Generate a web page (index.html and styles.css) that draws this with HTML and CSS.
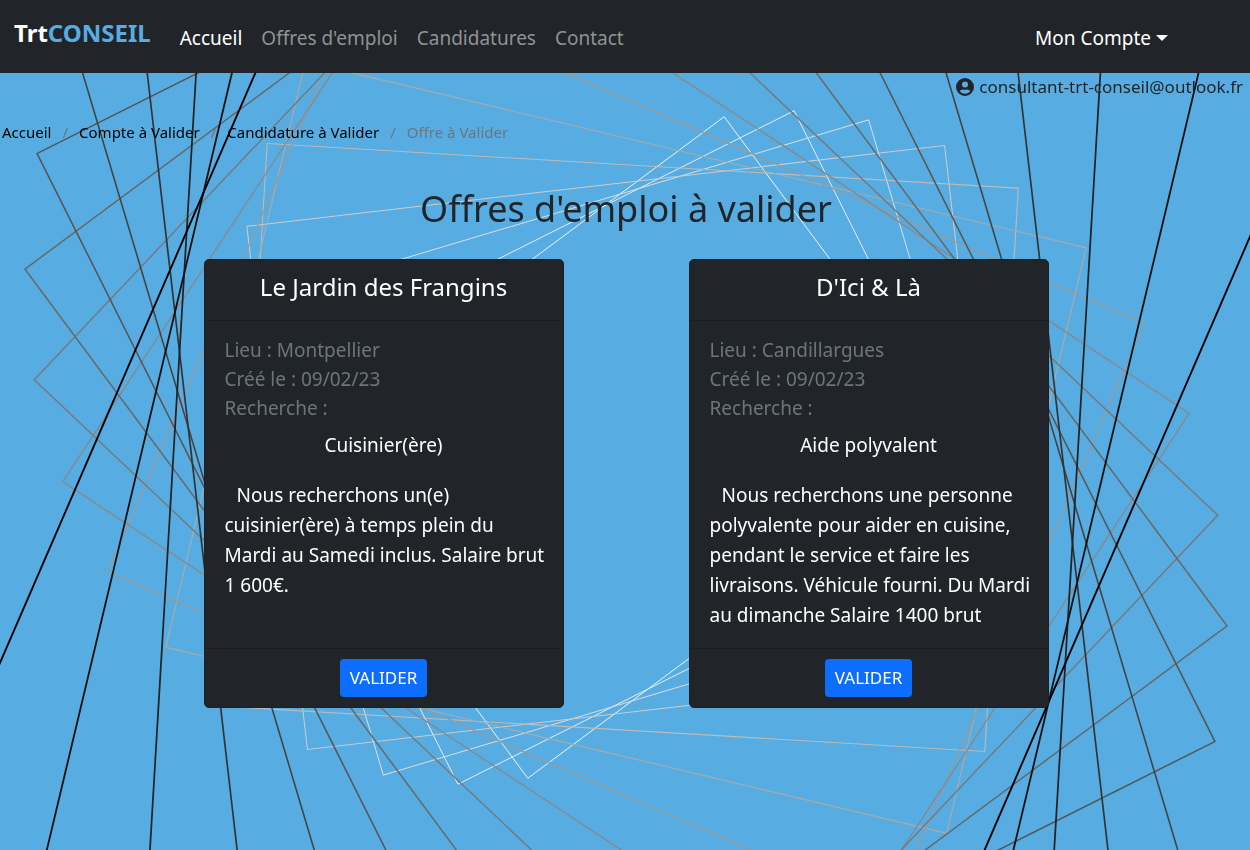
FILE: index.html
```
<!DOCTYPE html>
<html lang="fr">
<head>
<meta charset="utf-8">
<title>TrtConseil - Offres à valider</title>
<link rel="stylesheet" href="styles.css">
</head>
<body>
<svg class="backdrop" viewBox="-626 -447.5 1250 850" preserveAspectRatio="xMidYMid slice" aria-hidden="true">
  <defs><rect id="frame" x="-276" y="-207" width="552" height="414"/></defs>
  <g id="frames" fill="none" stroke-width="0.8"></g>
</svg>

<header class="navbar">
  <a class="brand" href="#">Trt<span class="brand-accent">CONSEIL</span></a>
  <nav class="nav">
    <a class="nav-link active" href="#">Accueil</a>
    <a class="nav-link" href="#">Offres d'emploi</a>
    <a class="nav-link" href="#">Candidatures</a>
    <a class="nav-link" href="#">Contact</a>
  </nav>
  <button class="account" type="button">Mon Compte<span class="caret"></span></button>
</header>

<main class="page">
  <div class="user">
    <svg class="user-icon" viewBox="0 0 512 512" aria-hidden="true"><path fill-rule="evenodd" d="M256 0a256 256 0 1 0 0 512a256 256 0 1 0 0-512zM256 96a86 86 0 1 1 0 172a86 86 0 1 1 0-172zM256 448c-62 0-115-26-149-68c18-34 52-54 91-54c4 0 20 10 58 10s54-10 58-10c39 0 73 20 91 54c-34 42-87 68-149 68z"/></svg>
    <span>consultant-trt-conseil@outlook.fr</span>
  </div>

  <nav aria-label="Fil d'Ariane">
    <ol class="breadcrumb">
      <li><a href="#">Accueil</a></li>
      <li><a href="#">Compte à Valider</a></li>
      <li><a href="#">Candidature à Valider</a></li>
      <li class="current" aria-current="page">Offre à Valider</li>
    </ol>
  </nav>

  <h1 class="title">Offres d'emploi à valider</h1>

  <div class="offers">
    <article class="card">
      <h2 class="card-header">Le Jardin des Frangins</h2>
      <div class="card-body">
        <p class="meta">Lieu : Montpellier</p>
        <p class="meta">Créé le : 09/02/23</p>
        <p class="meta">Recherche :</p>
        <h3 class="job">Cuisinier(ère)</h3>
        <p class="description">Nous recherchons un(e) cuisinier(ère) à temps plein du Mardi au Samedi inclus. Salaire brut 1&nbsp;600€.</p>
      </div>
      <div class="card-footer"><button class="btn" type="button">VALIDER</button></div>
    </article>
    <article class="card">
      <h2 class="card-header">D'Ici &amp; Là</h2>
      <div class="card-body">
        <p class="meta">Lieu : Candillargues</p>
        <p class="meta">Créé le : 09/02/23</p>
        <p class="meta">Recherche :</p>
        <h3 class="job">Aide polyvalent</h3>
        <p class="description">Nous recherchons une personne polyvalente pour aider en cuisine, pendant le service et faire les livraisons. Véhicule fourni. Du Mardi au dimanche Salaire 1400 brut</p>
      </div>
      <div class="card-footer"><button class="btn" type="button">VALIDER</button></div>
    </article>
  </div>
</main>
<script src="backdrop.js"></script>
</body>
</html>
```
FILE: backdrop.js
```
// Sixteen nested 4:3 frames, each turned 10 degrees and drawn darker than the last.
const group = document.getElementById("frames");
for (let i = 0; i < 16; i++) {
  const frame = document.createElementNS("http://www.w3.org/2000/svg", "use");
  const grey = 255 - i * 17;
  frame.setAttribute("href", "#frame");
  frame.setAttribute("stroke", `rgb(${grey},${grey},${grey})`);
  frame.setAttribute("transform", `rotate(${-36.6 + 10 * i}) scale(${1 + 0.0908 * i})`);
  group.appendChild(frame);
}
```
FILE: styles.css
```
* { box-sizing: border-box; }

body {
  margin: 0;
  min-height: 100vh;
  background: #57ade1;
  color: #212529;
  font: 19px/30px "Noto Sans", "Open Sans", sans-serif;
}

h1, h2, h3, p, ol { margin: 0; padding: 0; font-weight: 400; }
a { color: inherit; text-decoration: none; }
button { font: inherit; cursor: pointer; }

.backdrop {
  position: fixed;
  inset: 0;
  z-index: -1;
  width: 100%;
  height: 100%;
}

.navbar {
  display: flex;
  align-items: center;
  padding: 14px 82px 11px 14px;
  background: #212529;
  color: #fff;
}

.brand {
  padding-bottom: 10px;
  font-size: 24px;
  line-height: 38px;
  font-weight: 700;
}
.brand-accent { color: #57ade1; }

.nav { display: flex; flex: 1; gap: 19px; margin-left: 29px; }
.nav-link { color: #909294; }
.nav-link.active { color: #fff; }

.account {
  display: flex;
  align-items: center;
  gap: 5px;
  padding: 0;
  border: 0;
  background: none;
  color: #fff;
}
.caret {
  border: 6px solid transparent;
  border-top-color: #fff;
  border-bottom: 0;
}

.page { padding-left: 2px; }

.user {
  display: flex;
  justify-content: flex-end;
  align-items: center;
  gap: 5px;
  padding: 0 7px;
  font-size: 17px;
  line-height: 28px;
}
.user-icon { width: 18px; height: 18px; fill: #212529; }

.breadcrumb {
  display: flex;
  padding: 19px 0;
  list-style: none;
  font-size: 15px;
  line-height: 24px;
  color: #000;
}
.breadcrumb li + li::before { content: "/"; padding: 0 11px; color: #6c757d; }
.breadcrumb .current { color: #6c757d; }

.title {
  margin: 21px 0 25px;
  font-size: 36px;
  line-height: 50px;
  text-align: center;
}

.offers {
  display: grid;
  grid-template-columns: repeat(2, 360px);
  justify-content: center;
  gap: 24px 125px;
  padding-bottom: 24px;
}

.card {
  display: flex;
  flex-direction: column;
  border: 1px solid #1d2024;
  border-radius: 5px;
  background: #212529;
  color: #fff;
}
.card-header {
  padding: 9px 20px 15px;
  border-bottom: 1px solid #1b1e21;
  font-size: 24px;
  line-height: 36px;
  text-align: center;
}
.card-body { flex: 1; padding: 15px 20px 18px; }
.meta { color: #6c757d; line-height: 29px; }
.job { margin: 8px 0 20px; font-size: 19px; line-height: 29px; text-align: center; }
.description { margin-right: -6px; text-indent: 12px; }
.card-footer {
  padding: 10px;
  border-top: 1px solid #1b1e21;
  text-align: center;
}
.btn {
  display: block;
  margin: 0 auto;
  padding: 4px 10px;
  border: 0;
  border-radius: 4px;
  background: #0d6efd;
  color: #fff;
  font-size: 17px;
}
```
